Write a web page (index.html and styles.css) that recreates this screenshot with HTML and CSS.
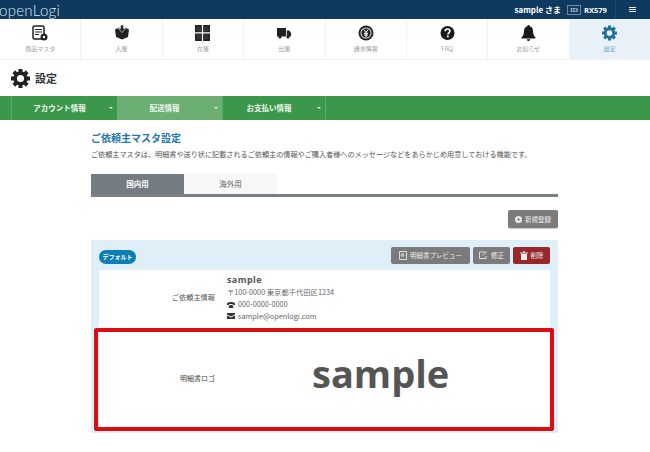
FILE: index.html
```html
<!DOCTYPE html>
<html lang="ja">
<head>
    <meta charset="UTF-8">
    <title>設定</title>
    <link rel="stylesheet" href="styles.css">
</head>
<body>
    <svg class="defs" width="0" height="0">
        <symbol id="gear" viewBox="0 0 24 24">
            <circle cx="12" cy="12" r="6.800" fill="none" stroke="currentColor" stroke-width="4.600"/>
            <g stroke="currentColor" stroke-width="5">
                <path d="M12 0v5M12 19v5M0 12h5M19 12h5M3.500 3.500l3.600 3.600M16.900 16.900l3.600 3.600M20.500 3.500l-3.600 3.600M7.100 16.900l-3.600 3.600"/>
            </g>
        </symbol>
    </svg>

    <header class="topbar">
        <div class="logo">openLogi</div>
        <div class="account">
            <span class="user">sample さま</span>
            <span class="id-box">ID</span>
            <span class="user-id">RX579</span>
            <span class="menu-btn"><i></i><i></i><i></i></span>
        </div>
    </header>

    <nav class="mainnav">
        <a class="nav-item">
            <svg width="16" height="16" viewBox="0 0 16 16"><rect x="1" y="1" width="11" height="13" rx="1.500" fill="none" stroke="#222" stroke-width="1.500"/><path d="M3 4.500h7M3 7h7M3 9.500h4" stroke="#222" stroke-width="1.200"/><circle cx="12" cy="12" r="3.500" fill="#222"/><circle cx="12" cy="12" r="1.200" fill="#fff"/></svg>
            <span>商品マスタ</span>
        </a>
        <a class="nav-item">
            <svg width="16" height="16" viewBox="0 0 16 16"><path d="M1 4.500l4-2 3 2v10l-6-2.500zM15 4.500l-4-2-3 2v10l6-2.500z" fill="#222"/><path d="M6.500 0h3v3.500h2L8 7.500 4.500 3.500h2z" fill="#222" stroke="#fff" stroke-width=".6"/></svg>
            <span>入庫</span>
        </a>
        <a class="nav-item">
            <svg width="15" height="16" viewBox="0 0 15 16"><path d="M0 0h15v16H0z" fill="#222"/><path d="M1.500 1.500h5v5h-5zM8.500 1.500h5v5h-5zM1.500 9h5v5.500h-5zM8.500 9h5v5.500h-5z" fill="#333"/><path d="M0 7.200h15v1.200H0zM6.900 0h1.200v16H6.900z" fill="#fff"/></svg>
            <span>在庫</span>
        </a>
        <a class="nav-item">
            <svg width="16" height="16" viewBox="0 0 16 16"><path d="M1 3h9v8.500H1zM10.800 5.500h2.600l1.600 2.500v3.500h-4.200z" fill="#222"/><circle cx="4" cy="12" r="1.600" fill="#222"/><circle cx="12" cy="12" r="1.600" fill="#222"/></svg>
            <span>出庫</span>
        </a>
        <a class="nav-item">
            <svg width="16" height="16" viewBox="0 0 16 16"><circle cx="8" cy="8" r="7.500" fill="#222"/><circle cx="8" cy="8" r="5.600" fill="#ddd"/><circle cx="8" cy="8" r="4.600" fill="#222"/><path d="M5.800 4.500L8 7.500l2.200-3M8 7.500V12M6 8.300h4M6 10h4" stroke="#fff" stroke-width="1" fill="none"/></svg>
            <span>請求情報</span>
        </a>
        <a class="nav-item">
            <svg width="15" height="15" viewBox="0 0 15 15"><circle cx="7.500" cy="7.500" r="7" fill="#1a1a1a"/><path d="M5.200 5.800C5.200 4.400 6.200 3.500 7.600 3.500s2.300.9 2.300 2.100c0 1.700-2 1.700-2 3.300" fill="none" stroke="#fff" stroke-width="1.600"/><rect x="6.900" y="10" width="1.800" height="1.800" fill="#fff"/></svg>
            <span class="latin">FAQ</span>
        </a>
        <a class="nav-item">
            <svg width="15" height="16" viewBox="0 0 15 16"><path d="M7.500 0c.8 0 1.200.5 1.200 1.200 2.300.6 3.300 2.500 3.300 4.800 0 3.500 1 5 2.500 6.500v1H.5v-1C2 11 3 9.500 3 6c0-2.300 1-4.200 3.300-4.800C6.300.5 6.700 0 7.500 0zM5.700 14.300h3.600c0 1-.8 1.700-1.800 1.700s-1.800-.7-1.800-1.700z" fill="#1a1a1a"/></svg>
            <span>お知らせ</span>
        </a>
        <a class="nav-item active">
            <svg class="gear-blue" width="15" height="15"><use href="#gear"/></svg>
            <span>設定</span>
        </a>
    </nav>

    <div class="page-title">
        <svg class="gear-dark" width="19" height="19"><use href="#gear"/></svg>
        <h1>設定</h1>
    </div>

    <div class="subnav">
        <a class="sub-item">アカウント情報</a>
        <a class="sub-item active">配送情報</a>
        <a class="sub-item">お支払い情報</a>
    </div>

    <main class="content">
        <h2>ご依頼主マスタ設定</h2>
        <p class="lead">ご依頼主マスタは、明細書や送り状に記載されるご依頼主の情報やご購入者様へのメッセージなどをあらかじめ用意しておける機能です。</p>

        <div class="tabs">
            <a class="tab active">国内用</a>
            <a class="tab">海外用</a>
        </div>

        <div class="new-row">
            <a class="btn"><span class="plus">+</span>新規登録</a>
        </div>

        <section class="sender-card">
            <div class="card-head">
                <span class="badge">デフォルト</span>
                <div class="actions">
                    <a class="btn">
                        <svg width="8" height="9" viewBox="0 0 8 9"><path d="M.5.5h7v8h-7zM2 5l1.500-3L5 5z" fill="none" stroke="#ddd"/></svg>
                        明細書プレビュー
                    </a>
                    <a class="btn">
                        <svg width="9" height="8" viewBox="0 0 9 8"><path d="M6 1H.5v6.500h6.500V5M3.500 4.500L8 .5" fill="none" stroke="#ddd"/></svg>
                        修正
                    </a>
                    <a class="btn danger">
                        <svg width="8" height="9" viewBox="0 0 8 9"><path d="M0 1.500h8v1H0zM3 .2h2v1H3zM1 3h6v6H1z" fill="#eee"/></svg>
                        削除
                    </a>
                </div>
            </div>
            <div class="card-body">
                <div class="row info-row">
                    <div class="row-label">ご依頼主情報</div>
                    <div class="row-value">
                        <div class="name">sample</div>
                        <div>〒100-0000 東京都千代田区1234</div>
                        <div class="with-icon">
                            <svg width="8" height="7" viewBox="0 0 8 7"><path d="M0 2.500C1 .5 7 .5 8 2.500V4H5.800V3H2.200v1H0zM1.500 7l1-3h3l1 3z" fill="#333"/></svg>
                            000-0000-0000
                        </div>
                        <div class="with-icon">
                            <svg width="8" height="6" viewBox="0 0 8 6"><path d="M0 0h8v1.500L4 3.500 0 1.500zM0 2.500l4 2 4-2V6H0z" fill="#333"/></svg>
                            sample@openlogi.com
                        </div>
                    </div>
                </div>
                <div class="row logo-row">
                    <div class="row-label">明細書ロゴ</div>
                    <div class="logo-sample">sample</div>
                </div>
            </div>
        </section>
    </main>
</body>
</html>
```

FILE: styles.css
```css
* {
    box-sizing: border-box;
}

body {
    margin: 0;
    font-family: "Noto Sans CJK JP", "Noto Sans", sans-serif;
    color: #444;
    background: #fff;
    overflow: hidden;
}

.defs {
    position: absolute;
}

.topbar {
    height: 19px;
    background: #0e3a60;
    display: flex;
    justify-content: space-between;
    align-items: center;
    color: #fff;
}

.logo {
    font-family: "Lato", sans-serif;
    font-weight: 300;
    font-size: 15px;
    letter-spacing: 0.3px;
    margin-left: -1px;
    color: #dfe8ef;
}

.account {
    display: flex;
    align-items: center;
    font-size: 7px;
    font-weight: 700;
    height: 100%;
}

.user {
    font-size: 8px;
}

.id-box {
    border: 1px solid #6f8aa3;
    width: 14px;
    height: 10px;
    line-height: 8px;
    text-align: center;
    font-family: "Liberation Serif", serif;
    font-weight: 400;
    margin-left: 6px;
    margin-right: 3px;
}

.user-id {
    font-family: "Open Sans", sans-serif;
    font-size: 7.500px;
    width: 31px;
}

.menu-btn {
    height: 100%;
    width: 35px;
    border-left: 1px solid #1e4a70;
    display: flex;
    flex-direction: column;
    align-items: center;
    justify-content: center;
    gap: 1px;
    padding-right: 1px;
}

.menu-btn i {
    width: 7px;
    height: 1px;
    background: #e3e9ee;
}

.mainnav {
    display: flex;
    height: 41px;
    border-bottom: 1px solid #f0f0f0;
}

.nav-item {
    flex: 1;
    display: flex;
    flex-direction: column;
    align-items: center;
    padding-top: 6px;
    border-right: 1px solid #f2f2f2;
    font-size: 6px;
    font-weight: 300;
    color: #666;
}

.nav-item svg {
    height: 16px;
    flex: none;
}

.nav-item span {
    margin-top: 3px;
    line-height: 9px;
}

.nav-item .latin {
    font-size: 6.500px;
}

.nav-item.active {
    background: #e8f1f7;
    border-right: 0;
    color: #2a7aa5;
}

.gear-blue {
    color: #1f6f9f;
}

.page-title {
    height: 36px;
    display: flex;
    align-items: center;
    padding-left: 11px;
    gap: 5px;
}

.gear-dark {
    color: #222;
}

.page-title h1 {
    margin: 0;
    font-size: 11px;
    font-weight: 700;
    color: #333;
}

.subnav {
    height: 24px;
    background: #3b974a;
    display: flex;
    padding-left: 11px;
}

.sub-item {
    width: 105px;
    position: relative;
    color: #f1f8f2;
    font-size: 7.500px;
    font-weight: 700;
    line-height: 24px;
    text-align: center;
    padding-right: 10px;
    border-left: 1px solid #5aa867;
}

.sub-item:first-child {
    width: 106px;
}

.sub-item:last-child {
    width: 104px;
    border-right: 1px solid #5aa867;
}

.sub-item::after {
    content: "";
    position: absolute;
    right: 4px;
    top: 11px;
    border: 2px solid transparent;
    border-top-color: #e8f3ea;
}

.sub-item.active {
    background: #6baf72;
    border-left: 0;
}

.content {
    width: 467px;
    margin-left: 91px;
    padding-top: 12px;
}

h2 {
    margin: 0;
    font-size: 10px;
    line-height: 12px;
    font-weight: 700;
    color: #1f78a8;
}

.lead {
    margin: 5px 0 0;
    font-size: 7.130px;
    line-height: 11px;
    color: #555;
    white-space: nowrap;
}

.tabs {
    display: flex;
    margin-top: 14px;
    height: 23px;
    border-bottom: 3px solid #7a7f84;
}

.tab {
    width: 93px;
    background: #f7f7f7;
    font-size: 7.500px;
    color: #666;
    text-align: center;
    line-height: 20px;
}

.tab.active {
    background: #747b82;
    color: #fff;
    font-weight: 700;
}

.new-row {
    display: flex;
    justify-content: flex-end;
    margin-top: 13px;
}

.btn {
    display: flex;
    align-items: center;
    justify-content: center;
    gap: 3px;
    height: 17px;
    padding: 0 5px;
    background: #7b7b7b;
    border-radius: 2px;
    color: #eee;
    font-size: 6.500px;
    white-space: nowrap;
}

.new-row .btn {
    width: 50px;
    height: 18px;
    padding: 0;
    box-shadow: 0 1px 1px #ccc;
}

.plus {
    width: 7px;
    height: 7px;
    border-radius: 50%;
    background: #eee;
    color: #7b7b7b;
    font-size: 7px;
    font-weight: 700;
    line-height: 7px;
    text-align: center;
}

.sender-card {
    margin-top: 12px;
    height: 193px;
    background: #dfeff8;
    padding: 6px 8px 0;
}

.card-head {
    display: flex;
    justify-content: space-between;
    align-items: center;
    height: 18px;
}

.badge {
    width: 37px;
    height: 14px;
    border-radius: 7px;
    background: #0e7fb5;
    color: #fff;
    font-size: 6px;
    font-weight: 700;
    line-height: 14px;
    text-align: center;
    margin-top: 3px;
}

.actions {
    display: flex;
    gap: 3px;
}

.actions .btn:first-child {
    width: 79px;
}

.actions .btn:nth-child(2) {
    width: 37px;
}

.actions .btn.danger {
    width: 37px;
    background: #96272b;
}

.card-body {
    margin-top: 6px;
    background: #fff;
    height: 161px;
}

.row {
    display: flex;
    align-items: center;
}

.info-row {
    height: 58px;
    align-items: flex-start;
}

.info-row .row-label {
    margin-top: 22px;
}

.row-label {
    width: 116px;
    text-align: right;
    font-size: 7.200px;
    color: #555;
    flex: none;
}

.row-value {
    margin-left: 12px;
    font-size: 7.300px;
    line-height: 12px;
    color: #666;
    padding-top: 4px;
}

.name {
    font-family: "Open Sans", sans-serif;
    font-weight: 700;
    font-size: 9px;
    line-height: 12px;
    letter-spacing: 0.400px;
    color: #555;
}

.with-icon {
    display: flex;
    align-items: center;
    gap: 3px;
}

.logo-row {
    position: relative;
    height: 103px;
}

/* red annotation frame lies over the row */
.logo-row::after {
    content: "";
    position: absolute;
    top: 0;
    left: -5px;
    right: -4px;
    bottom: 0;
    border: 4px solid #dc0d12;
    border-radius: 2px;
}

.logo-row .row-label {
    font-size: 7px;
    color: #444;
    margin-top: -4px;
}

.logo-sample {
    margin-left: 97px;
    font-family: "Open Sans", sans-serif;
    font-weight: 700;
    font-size: 38px;
    line-height: 50px;
    color: #555;
    margin-top: -14px;
}
```
